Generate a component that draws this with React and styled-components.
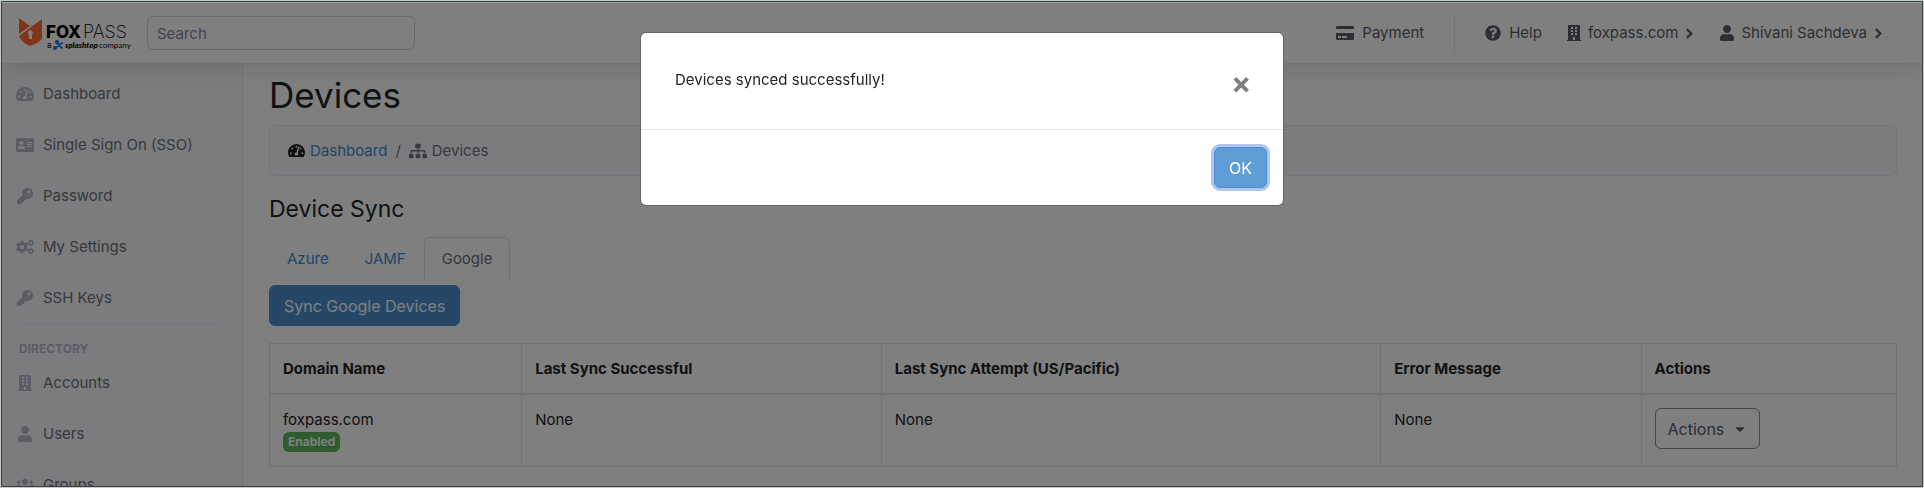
import React from "react";
import styled, { createGlobalStyle } from "styled-components";
import {
  FaTachometerAlt, FaAddressCard, FaKey, FaCogs, FaBuilding, FaUser, FaUsers,
  FaCreditCard, FaQuestionCircle, FaChevronRight, FaSitemap, FaCaretDown,
} from "react-icons/fa";

const GlobalStyle = createGlobalStyle`
  *, *::before, *::after { box-sizing: border-box; }
  html, body, #root { height: 100%; }
  body {
    margin: 0;
    overflow: hidden;
    background: #fff;
    color: #212529;
    font-family: Inter, "Liberation Sans", sans-serif;
    font-size: 15px;
    line-height: 24px;
  }
  a { text-decoration: none; color: inherit; }
  button, input { font: inherit; color: inherit; }
  h1, h2, h3, p, ul, ol { margin: 0; padding: 0; font-weight: 400; }
  ul, ol { list-style: none; }
`;

const Frame = styled.div`
  height: 100vh;
  overflow: hidden;
  display: flex;
  flex-direction: column;
  border: 1px solid #c6c8ca;
  padding: 2px 1px 1px;
`;

const TopBar = styled.header`
  flex: none;
  height: 60px;
  display: flex;
  align-items: center;
  padding: 0 38px 0 16px;
  background: #fff;
  box-shadow: 0 2px 28px rgba(58, 59, 69, 0.2);
  z-index: 1;
`;

const Brand = styled.a`
  display: flex;
  align-items: center;
  width: 114px;
  margin-right: 15px;
`;

const SearchBox = styled.input`
  width: 268px;
  height: 34px;
  padding: 0 9px;
  border: 1px solid #d1d3e2;
  border-radius: 6px;
  background: #fff;
  &::placeholder { color: #858796; opacity: 1; }
`;

const TopNav = styled.nav`
  margin-left: auto;
  display: flex;
  align-items: center;
  color: #5a5c69;
`;

const TopLink = styled.a`
  display: flex;
  align-items: center;
  gap: ${(p) => (p.$tight ? 6 : 8)}px;
  margin-left: ${(p) => p.$before}px;
`;

const Divider = styled.span`
  width: 1px;
  height: 40px;
  margin-left: 30px;
  background: #e3e6f0;
`;

const Body = styled.div`
  flex: 1;
  min-height: 0;
  display: flex;
`;

const Sidebar = styled.nav`
  flex: none;
  width: 241px;
  padding: 5px 0 0 14px;
  background: #f8f9fc;
  border-right: 1px solid #e9ebf0;
  overflow: hidden;
`;

const SideLink = styled.a`
  display: flex;
  align-items: center;
  gap: 9px;
  padding: 13px 0;
  line-height: 25px;
  color: #6e7378;
  svg { width: 18px; color: #b7b9cc; }
`;

const SideRule = styled.hr`
  margin: 0 25px 0 3px;
  border: 0;
  border-top: 1px solid #eaecf4;
`;

const SideTitle = styled.h3`
  padding: 16px 0 0 3px;
  font-size: 12px;
  line-height: 17px;
  font-weight: 700;
  color: #b7b9cc;
`;

const Content = styled.main`
  flex: 1;
  min-width: 0;
  padding: 8px 25px 0 26px;
`;

const PageTitle = styled.h1`
  font-size: 35px;
  line-height: 48px;
`;

const Crumbs = styled.ol`
  display: flex;
  align-items: center;
  gap: 8px;
  height: 51px;
  margin-top: 6px;
  padding: 0 18px;
  border: 1px solid #eaecf4;
  border-radius: 6px;
  background: #f8f9fc;
`;

const Crumb = styled.li`
  display: flex;
  align-items: center;
  gap: 5px;
  color: ${(p) => (p.$muted ? "#6c757d" : "#212529")};
  a { color: #3d8bd4; }
`;

const SectionTitle = styled.h2`
  margin-top: 18px;
  font-size: 23px;
  line-height: 30px;
`;

const Tabs = styled.div`
  display: flex;
  margin-top: 13px;
`;

const Tab = styled.button`
  height: 42px;
  padding: 0 17px;
  border: 1px solid ${(p) => (p.$active ? "#dddfeb" : "transparent")};
  border-bottom: 0;
  border-radius: 6px 6px 0 0;
  background: transparent;
  color: ${(p) => (p.$active ? "#6e707e" : "#3d8bd4")};
`;

const Primary = styled.button`
  height: 41px;
  padding: 0 14px;
  border: 1px solid #4a90d0;
  border-radius: 6px;
  background: #4a90d0;
  color: #fff;
  font-size: 16px;
`;

const SyncButton = styled(Primary)`
  display: block;
  margin-top: 6px;
`;

const DataTable = styled.table`
  width: 100%;
  margin-top: 17px;
  border-collapse: collapse;
  table-layout: fixed;
  th, td {
    padding: 13px 13px 14px;
    text-align: left;
    vertical-align: top;
    border: 1px solid #e3e6f0;
  }
  th {
    padding-bottom: 12px;
    font-weight: 700;
    border-bottom-width: 2px;
  }
`;

const Badge = styled.span`
  display: block;
  width: max-content;
  padding: 0 5px;
  border-radius: 6px;
  background: #5cb85c;
  color: #fff;
  font-size: 12px;
  font-weight: 700;
  line-height: 20px;
`;

const DropButton = styled.button`
  display: flex;
  align-items: center;
  gap: 9px;
  height: 41px;
  padding: 0 12px;
  border: 1px solid #858796;
  border-radius: 6px;
  background: transparent;
  font-size: 16px;
  color: #5a5c69;
`;

const Backdrop = styled.div`
  position: fixed;
  inset: 1px;
  z-index: 2;
  display: flex;
  justify-content: center;
  align-items: flex-start;
  padding-top: 31px;
  border: 1px solid #3c3e40;
  background: rgba(0, 0, 0, 0.5);
  box-shadow: inset 0 1px #8fb092;
`;

const Dialog = styled.section`
  width: 642px;
  max-width: 100%;
  border-radius: 5px;
  background: #fff;
  box-shadow: 0 0 0 1px #666;
`;

const DialogBody = styled.div`
  display: flex;
  justify-content: space-between;
  padding: 35px 34px;
  height: 96px;
`;

const CloseButton = styled.button`
  width: 18px;
  height: 30px;
  padding: 0;
  border: 0;
  background: none;
  color: #7f7f7f;
  font-size: 30px;
  font-weight: 700;
  line-height: 28px;
`;

const DialogFooter = styled.div`
  display: flex;
  justify-content: flex-end;
  padding: 17px 16px;
  border-top: 1px solid #e3e6f0;
`;

const OkButton = styled(Primary)`
  background: #5f9dd6;
  box-shadow: 0 0 0 3px #b3c3f3;
`;

const Logo = () => (
  <svg width="114" height="36" viewBox="0 0 114 36" role="img" aria-label="Foxpass" fontFamily="Inter, sans-serif">
    <path fill="#ff6a33" d="M1 3 12 11 1 19ZM24 4V23Q23 27 12 31Q3 27 1 21Z" />
    <path fill="#fff" d="M12 15a3 3 0 0 1 2 5v4h-3v-4a3 3 0 0 1 1-5" />
    <text x="28" y="23" fontSize="17" fontWeight="800">FOX</text>
    <text x="65" y="23" fontSize="18" fontWeight="200">PASS</text>
    <text x="29" y="33" fontSize="8">a</text>
    <g fill="#1a7bea" stroke="#1a7bea" strokeWidth="2" strokeLinecap="round">
      <path fill="none" d="M37 33 44 28M38 27 44 33" />
      <circle cx="39" cy="27" r="1" />
      <circle cx="37" cy="33" r="1" />
    </g>
    <text x="47" y="33" fontFamily="Lato, sans-serif" fontSize="8" fontWeight="900" fontStyle="italic">splashtop</text>
    <text x="81" y="33" fontFamily="Lato, sans-serif" fontSize="8">company</text>
  </svg>
);

const Chevron = () => <FaChevronRight size={11} strokeWidth={40} stroke="currentColor" />;

const accountLinks = [
  [FaTachometerAlt, "Dashboard"],
  [FaAddressCard, "Single Sign On (SSO)"],
  [FaKey, "Password"],
  [FaCogs, "My Settings"],
  [FaKey, "SSH Keys"],
];
const directoryLinks = [
  [FaBuilding, "Accounts"],
  [FaUser, "Users"],
  [FaUsers, "Groups"],
];

const SideList = ({ items }) => (
  <ul>
    {items.map(([Icon, label]) => (
      <li key={label}><SideLink href="#"><Icon size={16} />{label}</SideLink></li>
    ))}
  </ul>
);

export default function App() {
  return (
    <>
      <GlobalStyle />
      <Frame>
        <TopBar>
          <Brand href="#"><Logo /></Brand>
          <SearchBox type="search" placeholder="Search" aria-label="Search" />
          <TopNav>
            <TopLink href="#" $before={0}><FaCreditCard size={18} />Payment</TopLink>
            <Divider />
            <TopLink href="#" $before={30}><FaQuestionCircle size={16} />Help</TopLink>
            <TopLink href="#" $before={24} $tight><FaBuilding size={16} />foxpass.com<Chevron /></TopLink>
            <TopLink href="#" $before={24} $tight><FaUser size={16} />Shivani Sachdeva<Chevron /></TopLink>
          </TopNav>
        </TopBar>
        <Body>
          <Sidebar>
            <SideList items={accountLinks} />
            <SideRule />
            <SideTitle>DIRECTORY</SideTitle>
            <SideList items={directoryLinks} />
          </Sidebar>
          <Content>
            <PageTitle>Devices</PageTitle>
            <Crumbs>
              <Crumb><FaTachometerAlt size={17} /><a href="#">Dashboard</a></Crumb>
              <Crumb $muted>/</Crumb>
              <Crumb $muted><FaSitemap size={18} />Devices</Crumb>
            </Crumbs>
            <SectionTitle>Device Sync</SectionTitle>
            <Tabs role="tablist">
              <Tab role="tab">Azure</Tab>
              <Tab role="tab">JAMF</Tab>
              <Tab role="tab" $active aria-selected>Google</Tab>
            </Tabs>
            <SyncButton>Sync Google Devices</SyncButton>
            <DataTable>
              <colgroup>
                <col style={{ width: "15.5%" }} />
                <col style={{ width: "22.1%" }} />
                <col style={{ width: "30.7%" }} />
                <col style={{ width: "16%" }} />
                <col />
              </colgroup>
              <thead>
                <tr>
                  <th>Domain Name</th>
                  <th>Last Sync Successful</th>
                  <th>Last Sync Attempt (US/Pacific)</th>
                  <th>Error Message</th>
                  <th>Actions</th>
                </tr>
              </thead>
              <tbody>
                <tr>
                  <td>foxpass.com<Badge>Enabled</Badge></td>
                  <td>None</td>
                  <td>None</td>
                  <td>None</td>
                  <td><DropButton>Actions<FaCaretDown size={14} /></DropButton></td>
                </tr>
              </tbody>
            </DataTable>
          </Content>
        </Body>
      </Frame>
      <Backdrop>
        <Dialog role="dialog" aria-modal="true" aria-label="Device sync result">
          <DialogBody>
            <p>Devices synced successfully!</p>
            <CloseButton aria-label="Close">×</CloseButton>
          </DialogBody>
          <DialogFooter><OkButton>OK</OkButton></DialogFooter>
        </Dialog>
      </Backdrop>
    </>
  );
}
